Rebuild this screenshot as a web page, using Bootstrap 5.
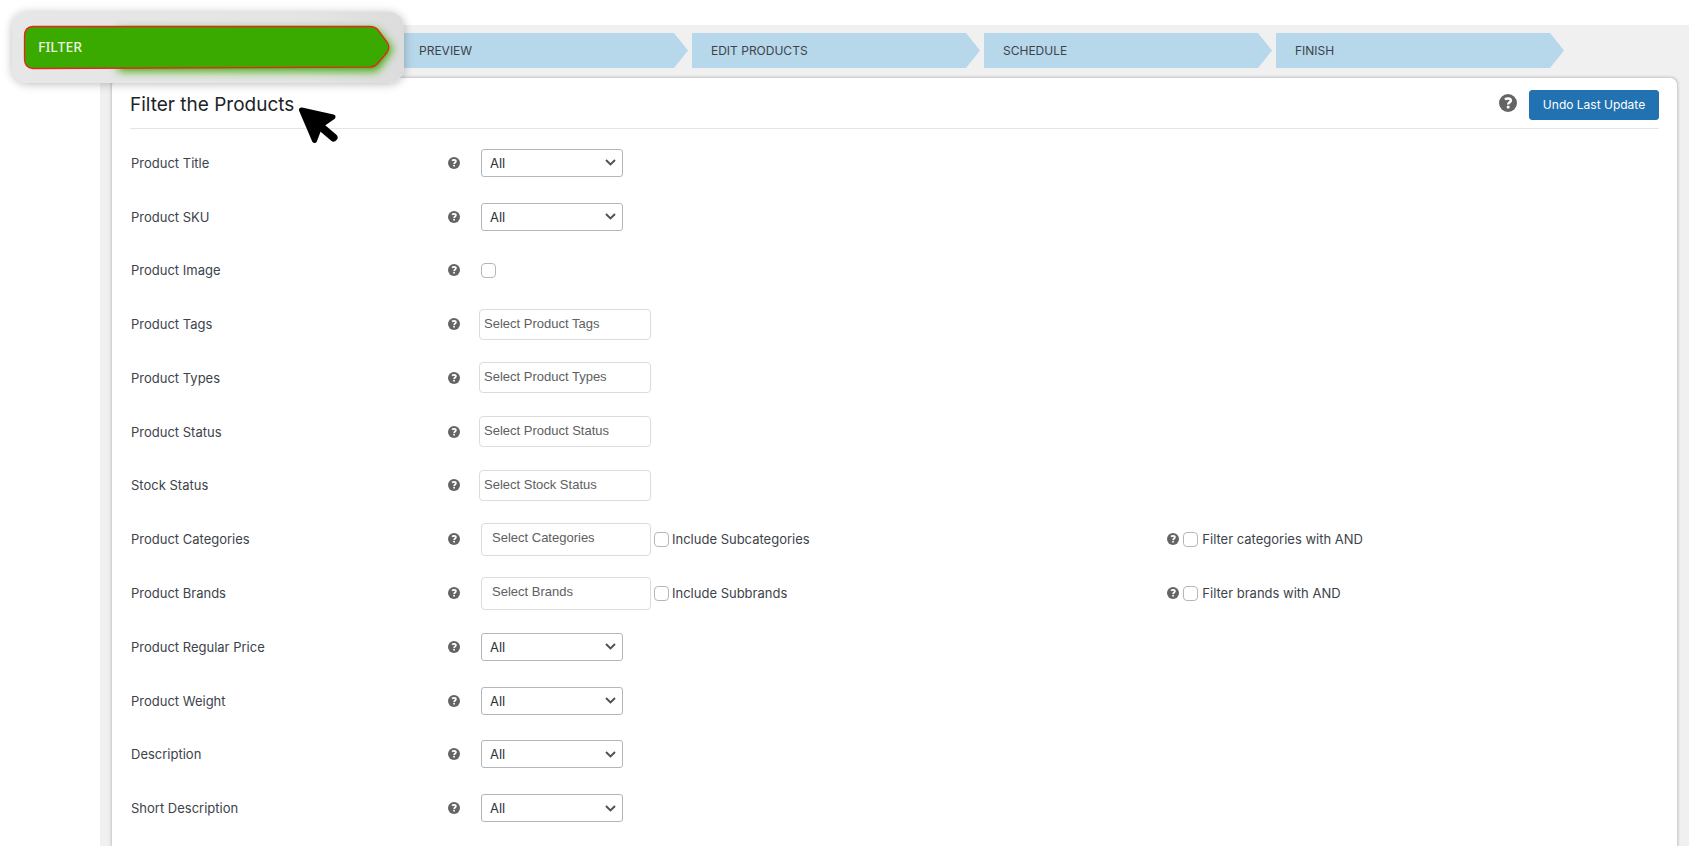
<!DOCTYPE html>
<html lang="en">
<head>
<meta charset="utf-8">
<meta name="viewport" content="width=device-width, initial-scale=1">
<title>Filter the Products</title>
<link href="https://cdn.jsdelivr.net/npm/bootstrap@5.3.0/dist/css/bootstrap.min.css" rel="stylesheet">
<style>
  body { font-family: Inter, "Liberation Sans", sans-serif; font-size: 13px; line-height: 20px; color: #3c434a; background: #fff; }
  .page-shell { min-height: 100vh; padding: 25px 0 0 100px; }
  .admin-area { background: #f0f0f1; padding: 8px 11px 0; }

  /* wizard steps */
  .steps { gap: 4px; max-width: 1456px; margin: 0 0 9px -3px; height: 35px; }
  .step-link { display: flex; align-items: center; height: 35px; padding: 1px 19px 0; font-size: 12px; color: #3c434a; text-decoration: none;
    background: #b7d7ea; clip-path: polygon(0 0, calc(100% - 14px) 0, 100% 50%, calc(100% - 14px) 100%, 0 100%); }
  .step-current { position: absolute; z-index: 5; left: -96px; top: -21px; width: 392px; height: 71px; border-radius: 15px;
    background: linear-gradient(90deg, #e7e7e7, #e4e4e4 75%, #dcdcdc); box-shadow: 0 1px 10px rgba(0,0,0,.27); padding: 0 26px; line-height: 70px;
    font-family: "Noto Sans", sans-serif; font-size: 14px; font-weight: 500; color: #e6f3df; text-decoration: none; }
  .step-current svg { position: absolute; left: 0; top: 0; overflow: visible; }
  .step-current span { position: relative; }

  /* panel */
  .panel { background: #fff; border: 1px solid #d3d3d5; border-bottom: 0; border-radius: 8px 8px 0 0; box-shadow: 0 0 3px rgba(0,0,0,.2); padding: 0 18px; }
  .panel-head { height: 51px; padding-top: 4px; border-bottom: 1px solid #e5e5e5; }
  .panel-title { font-size: 19px; line-height: 28px; color: #1d2327; }
  .pointer { position: absolute; left: 100%; top: 13px; margin-left: 2px; }
  .btn-undo { --bs-btn-bg: #2271b1; --bs-btn-border-color: #2271b1; --bs-btn-color: #fff; --bs-btn-hover-bg: #135e96; --bs-btn-hover-color: #fff;
    --bs-btn-font-size: 12px; --bs-btn-border-radius: 3px; --bs-btn-padding-x: 11px; --bs-btn-padding-y: 4px; line-height: 20px; width: 130px; white-space: nowrap; }
  .help { border: 0; background: none; padding: 0; display: block; line-height: 0; color: #646464; justify-self: start; }

  /* filter rows */
  .filters { display: grid; grid-auto-rows: 1fr; min-height: 699px; padding-top: 7px; box-sizing: content-box; }
  .filter-row { display: grid; grid-template-columns: 318px 31px 7fr 5fr; align-items: center; }
  .filter-row > label { padding-left: 1px; }
  .pick { width: 142px; height: 28px; margin-left: 2px; padding: 0 24px 0 8px; font-size: 13px; line-height: 20px; color: #2c3338; border: 1px solid #b4b6b9; border-radius: 3px;
    background-position: right 6px center; background-size: 11px 7px;
    background-image: url("data:image/svg+xml,%3Csvg xmlns='http://www.w3.org/2000/svg' viewBox='0 0 11 7'%3E%3Cpath d='M1 1l4.500 4.500L10 1' fill='none' stroke='%23505050' stroke-width='1.900'/%3E%3C/svg%3E"); }
  .entry { width: 172px; height: 31px; padding: 0 4px 2px; border: 1px solid #dcdcde; border-radius: 4px; font-family: "Liberation Sans", sans-serif; font-size: 13px; }
  .entry::placeholder { color: #606060; }
  .entry-tree { width: 170px; height: 33px; margin-left: 2px; padding: 0 10px 4px; }
  .tick.form-check-input { width: 15px; height: 15px; margin: 0; border: 1px solid #b4b6b9; border-radius: 4px; flex: none; }
  .tick-solo.form-check-input { margin-left: 2px; }
  .tick-next.form-check-input { margin: 0 3px; }
</style>
</head>
<body>
<svg width="0" height="0" class="position-absolute" aria-hidden="true">
  <symbol id="q" viewBox="0 0 18 18"><circle cx="9" cy="9" r="9" fill="currentColor"/><path d="M6 5.500C6.900 4.700 7.900 4.400 9 4.400c1.800 0 2.900.8 2.900 2.100 0 1.700-2.700 1.900-2.700 3.900" fill="none" stroke="#fff" stroke-width="2.500"/><rect x="7.800" y="11.700" width="2.700" height="2.700" rx=".7" fill="#fff"/></symbol>
</svg>

<div class="page-shell d-flex flex-column overflow-hidden vh-100">
  <main class="admin-area d-flex flex-column flex-grow-1">
    <nav aria-label="Steps">
      <ol class="steps list-unstyled d-flex">
        <li class="col position-relative">
          <a class="step-current" href="#filter" aria-current="step">
            <svg width="392" height="71" aria-hidden="true">
              <defs>
                <filter id="glow" x="-10%" y="-60%" width="120%" height="220%"><feGaussianBlur stdDeviation="5"/></filter>
              </defs>
              <path d="M106 18H365L381 37L365 59H106Z" fill="#38a800" filter="url(#glow)"/>
              <path d="M21 14.500H358Q363 14.500 366 18L375 30Q378.500 35.500 375 40.500L366 51Q363 55 358 55.200L21 56.500Q12.500 56 12.500 47V24Q12.500 15 21 14.500Z" fill="#3aa900" stroke="#e5261c" stroke-width="1.300"/>
            </svg>
            <span>FILTER</span>
          </a>
        </li>
        <li class="col"><a class="step-link" href="#preview">PREVIEW</a></li>
        <li class="col"><a class="step-link" href="#edit">EDIT PRODUCTS</a></li>
        <li class="col"><a class="step-link" href="#schedule">SCHEDULE</a></li>
        <li class="col"><a class="step-link" href="#finish">FINISH</a></li>
      </ol>
    </nav>

    <section class="panel flex-grow-1">
      <header class="panel-head d-flex align-items-center justify-content-between">
        <h1 class="panel-title fw-normal position-relative m-0">Filter the Products
          <svg class="pointer" width="44" height="42" viewBox="0 0 44 42" aria-hidden="true"><path d="M5.500 6L37 13L24 22L18.500 36.500Z" fill="#000" stroke="#000" stroke-width="5" stroke-linejoin="round"/><path d="M24 22L37.500 33.500" stroke="#000" stroke-width="8" stroke-linecap="round"/></svg>
        </h1>
        <div class="d-flex align-items-center">
          <button class="help me-2 pe-1 pb-1" type="button" aria-label="Help"><svg width="18" height="18"><use href="#q"/></svg></button>
          <button class="btn btn-undo" type="button">Undo Last Update</button>
        </div>
      </header>

      <form class="filters">
        <div class="filter-row">
          <label for="title">Product Title</label>
          <button class="help" type="button" aria-label="Help"><svg width="12" height="12"><use href="#q"/></svg></button>
          <select class="form-select pick" id="title"><option>All</option></select>
        </div>
        <div class="filter-row">
          <label for="sku">Product SKU</label>
          <button class="help" type="button" aria-label="Help"><svg width="12" height="12"><use href="#q"/></svg></button>
          <select class="form-select pick" id="sku"><option>All</option></select>
        </div>
        <div class="filter-row">
          <label for="image">Product Image</label>
          <button class="help" type="button" aria-label="Help"><svg width="12" height="12"><use href="#q"/></svg></button>
          <div class="d-flex"><input class="form-check-input tick tick-solo" type="checkbox" id="image"></div>
        </div>
        <div class="filter-row">
          <label for="tags">Product Tags</label>
          <button class="help" type="button" aria-label="Help"><svg width="12" height="12"><use href="#q"/></svg></button>
          <input class="form-control entry" type="text" id="tags" placeholder="Select Product Tags">
        </div>
        <div class="filter-row">
          <label for="types">Product Types</label>
          <button class="help" type="button" aria-label="Help"><svg width="12" height="12"><use href="#q"/></svg></button>
          <input class="form-control entry" type="text" id="types" placeholder="Select Product Types">
        </div>
        <div class="filter-row">
          <label for="status">Product Status</label>
          <button class="help" type="button" aria-label="Help"><svg width="12" height="12"><use href="#q"/></svg></button>
          <input class="form-control entry" type="text" id="status" placeholder="Select Product Status">
        </div>
        <div class="filter-row">
          <label for="stock">Stock Status</label>
          <button class="help" type="button" aria-label="Help"><svg width="12" height="12"><use href="#q"/></svg></button>
          <input class="form-control entry" type="text" id="stock" placeholder="Select Stock Status">
        </div>
        <div class="filter-row">
          <label for="cats">Product Categories</label>
          <button class="help" type="button" aria-label="Help"><svg width="12" height="12"><use href="#q"/></svg></button>
          <div class="d-flex align-items-center">
            <input class="form-control entry entry-tree" type="text" id="cats" placeholder="Select Categories">
            <input class="form-check-input tick tick-next" type="checkbox" id="subcats"><label for="subcats">Include Subcategories</label>
          </div>
          <div class="d-flex align-items-center">
            <button class="help" type="button" aria-label="Help"><svg width="12" height="12"><use href="#q"/></svg></button>
            <input class="form-check-input tick mx-1" type="checkbox" id="catsand"><label for="catsand">Filter categories with AND</label>
          </div>
        </div>
        <div class="filter-row">
          <label for="brands">Product Brands</label>
          <button class="help" type="button" aria-label="Help"><svg width="12" height="12"><use href="#q"/></svg></button>
          <div class="d-flex align-items-center">
            <input class="form-control entry entry-tree" type="text" id="brands" placeholder="Select Brands">
            <input class="form-check-input tick tick-next" type="checkbox" id="subbrands"><label for="subbrands">Include Subbrands</label>
          </div>
          <div class="d-flex align-items-center">
            <button class="help" type="button" aria-label="Help"><svg width="12" height="12"><use href="#q"/></svg></button>
            <input class="form-check-input tick mx-1" type="checkbox" id="brandsand"><label for="brandsand">Filter brands with AND</label>
          </div>
        </div>
        <div class="filter-row">
          <label for="price">Product Regular Price</label>
          <button class="help" type="button" aria-label="Help"><svg width="12" height="12"><use href="#q"/></svg></button>
          <select class="form-select pick" id="price"><option>All</option></select>
        </div>
        <div class="filter-row">
          <label for="weight">Product Weight</label>
          <button class="help" type="button" aria-label="Help"><svg width="12" height="12"><use href="#q"/></svg></button>
          <select class="form-select pick" id="weight"><option>All</option></select>
        </div>
        <div class="filter-row">
          <label for="desc">Description</label>
          <button class="help" type="button" aria-label="Help"><svg width="12" height="12"><use href="#q"/></svg></button>
          <select class="form-select pick" id="desc"><option>All</option></select>
        </div>
        <div class="filter-row">
          <label for="short">Short Description</label>
          <button class="help" type="button" aria-label="Help"><svg width="12" height="12"><use href="#q"/></svg></button>
          <select class="form-select pick" id="short"><option>All</option></select>
        </div>
      </form>
    </section>
  </main>
</div>
<script src="https://cdn.jsdelivr.net/npm/bootstrap@5.3.0/dist/js/bootstrap.bundle.min.js"></script>
</body>
</html>
